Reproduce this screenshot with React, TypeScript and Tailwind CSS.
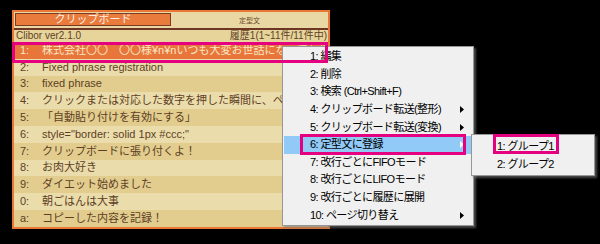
import React from "react";

const rows: { no: string; text: string }[] = [
  { no: "1:", text: "株式会社〇〇　〇〇様¥n¥nいつも大変お世話になっております。" },
  { no: "2:", text: "Fixed phrase registration" },
  { no: "3:", text: "fixed phrase" },
  { no: "4:", text: "クリックまたは対応した数字を押した瞬間に、ペーストされます" },
  { no: "5:", text: "「自動貼り付けを有効にする」" },
  { no: "6:", text: 'style="border: solid 1px #ccc;"' },
  { no: "7:", text: "クリップボードに張り付くよ！" },
  { no: "8:", text: "お肉大好き" },
  { no: "9:", text: "ダイエット始めました" },
  { no: "0:", text: "朝ごはんは大事" },
  { no: "a:", text: "コピーした内容を記録！" },
];

const menuItems: { label: string; sub?: boolean; active?: boolean }[] = [
  { label: "1: 編集" },
  { label: "2: 削除" },
  { label: "3: 検索 (Ctrl+Shift+F)" },
  { label: "4: クリップボード転送(整形)", sub: true },
  { label: "5: クリップボード転送(変換)", sub: true },
  { label: "6: 定型文に登録", sub: true, active: true },
  { label: "7: 改行ごとにFIFOモード" },
  { label: "8: 改行ごとにLIFOモード" },
  { label: "9: 改行ごとに履歴に展開" },
  { label: "10: ページ切り替え", sub: true },
];

function Arrow({ light }: { light?: boolean }) {
  return (
    <svg width="4" height="7" viewBox="0 0 4 7" className="shrink-0">
      <path d="M0 0 L4 3.5 L0 7 Z" fill={light ? "#ffffff" : "#000000"} />
    </svg>
  );
}

export default function App() {
  return (
    <div className="relative w-[600px] h-[244px] bg-black overflow-hidden font-['Liberation_Sans','Noto_Sans_CJK_JP',sans-serif]">
      {/* main window */}
      <div className="ml-[12px] mt-[10px] w-[318px] border-2 border-[#ea7736] bg-[#e9d8a4]">
        <div className="flex h-[16px] pt-[1px]">
          <div className="ml-[1px] w-[156px] h-[13px] bg-[#e97b3c] border border-[#7b3a22] flex items-center justify-center text-[11px] leading-none text-[#fbeee0]">
            クリップボード
          </div>
          <div className="flex-1 flex items-center justify-center text-[7px] leading-none text-[#6b4a2c]">
            定型文
          </div>
        </div>
        <div className="h-[2px] bg-[#6e3424]" />
        <div className="flex items-center justify-between h-[12px] pl-[2px] pr-[1px] bg-[#e6d49b] text-[10px] leading-none text-[#5e3f25]">
          <span>Clibor ver2.1.0</span>
          <span>履歴1(1~11件/11件中)</span>
        </div>
        <div className="flex flex-col">
          {rows.map((r, i) => {
            const first = i === 0;
            const bg = first
              ? "bg-[#e8753a] text-[#f8e7c6]"
              : i % 2 === 0
                ? "bg-[#e2cd8e] text-[#5e3f25]"
                : "bg-[#ebdcab] text-[#5e3f25]";
            return (
              <div key={r.no} className={`flex items-center h-[16.8px] text-[11px] leading-none whitespace-nowrap overflow-hidden ${bg}`}>
                <span className="w-[28px] pl-[6px] shrink-0">{r.no}</span>
                <span>{r.text}</span>
              </div>
            );
          })}
        </div>
      </div>

      {/* context menu */}
      <div className="absolute left-[282px] top-[46px] w-[192px] bg-[#f0f0f0] border border-[#979797] py-[1px] shadow-[2px_2px_2px_rgba(120,120,120,0.6)]">
        {menuItems.map((m) => (
          <div
            key={m.label}
            className={`flex items-center justify-between h-[17.6px] mx-[1px] pl-[26px] pr-[8px] text-[11px] leading-none tracking-[-0.6px] text-black whitespace-nowrap ${m.active ? "bg-[#91c9f7]" : ""}`}
          >
            <span>{m.label}</span>
            {m.sub && <Arrow light={m.active} />}
          </div>
        ))}
      </div>

      {/* submenu */}
      <div className="absolute left-[471px] top-[134px] w-[124px] bg-[#f0f0f0] border border-[#979797] py-[2px] shadow-[2px_2px_2px_rgba(120,120,120,0.6)]">
        <div className="flex items-center h-[18px] pl-[25px] text-[11px] leading-none tracking-[-0.6px] text-black">1: グループ1</div>
        <div className="flex items-center h-[18px] pl-[25px] text-[11px] leading-none tracking-[-0.6px] text-black">2: グループ2</div>
      </div>

      {/* highlight frames */}
      <div className="absolute left-[12px] top-[42px] w-[316px] h-[21px] border-[3px] border-[#e4007f]" />
      <div className="absolute left-[300px] top-[134px] w-[166px] h-[21px] border-[3px] border-[#e4007f]" />
      <div className="absolute left-[493px] top-[134px] w-[66px] h-[20px] border-[3px] border-[#e4007f]" />
    </div>
  );
}
